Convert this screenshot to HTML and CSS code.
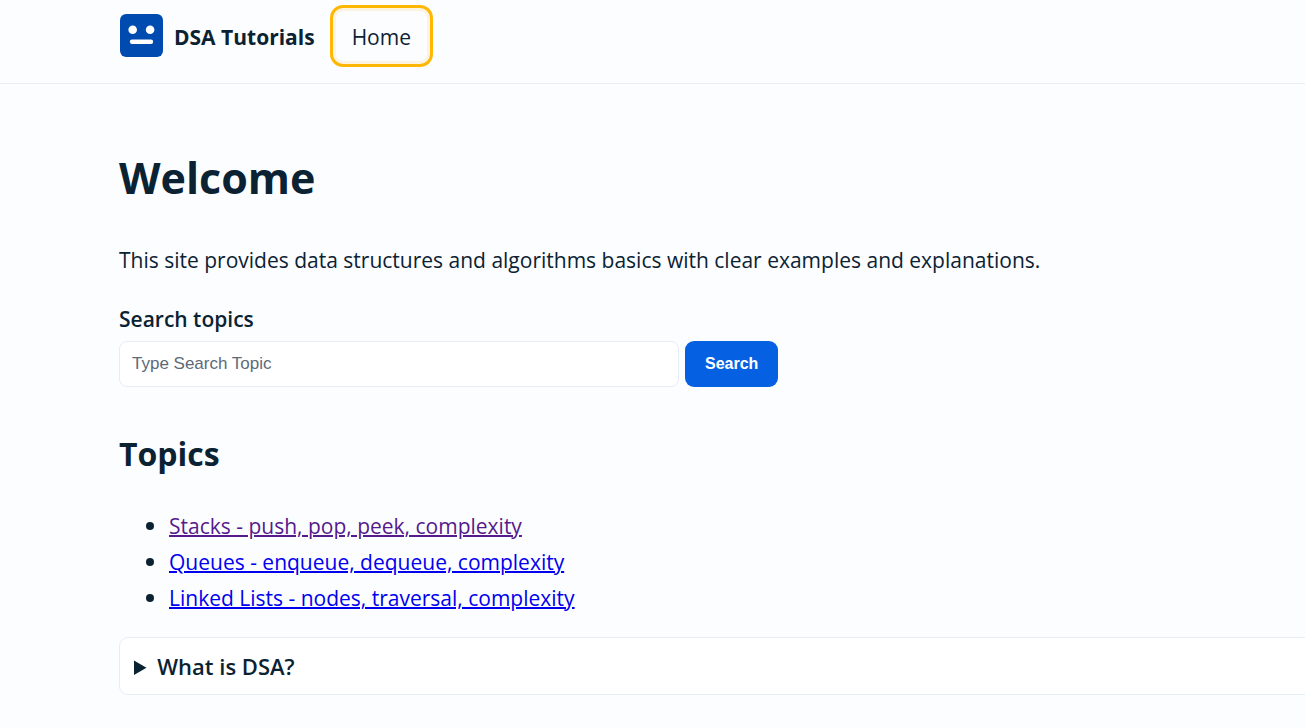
FILE: index.html
```html
<!DOCTYPE html>
<html lang="en">
<head>
<meta charset="utf-8">
<title>DSA Tutorials</title>
<link rel="stylesheet" href="styles.css">
</head>
<body>
<header class="site-header">
  <nav class="nav" aria-label="Main">
    <svg class="logo" viewBox="0 0 42 42" aria-hidden="true">
      <rect width="42" height="42" rx="6" fill="#004bb0"/>
      <circle cx="12.4" cy="15.4" r="4.2" fill="#fff"/>
      <circle cx="29.4" cy="15.4" r="4.2" fill="#fff"/>
      <rect x="9.6" y="25" width="22.8" height="4.4" rx="2.2" fill="#fff"/>
    </svg>
    <span class="brand">DSA Tutorials</span>
    <a class="nav-link" href="#home">Home</a>
  </nav>
</header>
<main class="content">
  <h1 class="title">Welcome</h1>
  <p class="intro">This site provides data structures and algorithms basics with clear examples and explanations.</p>
  <form class="search">
    <label class="search-label" for="topic">Search topics</label>
    <div class="search-row">
      <input class="search-input" id="topic" type="search" placeholder="Type Search Topic">
      <button class="search-button" type="button">Search</button>
    </div>
  </form>
  <h2 class="subtitle">Topics</h2>
  <ul class="topics">
    <li class="topic-item"><a class="topic visited" href="#stacks">Stacks - push, pop, peek, complexity</a></li>
    <li class="topic-item"><a class="topic" href="#queues">Queues - enqueue, dequeue, complexity</a></li>
    <li class="topic-item"><a class="topic" href="#lists">Linked Lists - nodes, traversal, complexity</a></li>
  </ul>
  <details class="faq">
    <summary class="question">What is DSA?</summary>
  </details>
</main>
</body>
</html>
```

FILE: styles.css
```css
* { box-sizing: border-box; }
body {
  margin: 0;
  overflow-x: hidden;
  background: #fcfdff;
  color: #0b2233;
  font: 21px/36px "Segoe UI", "Open Sans", "Noto Sans", sans-serif;
}
.site-header {
  padding: 5px 0 16px 120px;
  border-bottom: 1px solid #e6edf3;
}
.nav { display: flex; align-items: center; }
.logo { width: 43px; height: 43px; margin: 0 11px 2px 0; }
.brand { padding-top: 2px; font-weight: 700; margin-right: 15px; }
.nav-link {
  padding: 11px 19px 9px;
  border: 3px solid #ffb703;
  border-radius: 13px;
  box-shadow: inset 0 0 0 3px #fcf3e0;
  color: inherit;
  text-decoration: none;
}
.content { padding: 59px 0 32px 119px; }
.title { margin: 0 0 29px; font-size: 43px; line-height: 70px; }
.intro { margin: 0 0 24px; }
.search-label { display: block; font-weight: 600; line-height: 35px; margin-bottom: 4px; }
.search-row { display: flex; gap: 6px; }
.search-input {
  width: 560px;
  height: 46px;
  padding: 0 12px;
  border: 1px solid #e6edf6;
  border-radius: 8px;
  background: #fff;
  font: 17px "Liberation Sans", sans-serif;
}
.search-input::placeholder { color: #5c6b78; }
.search-button {
  height: 46px;
  padding: 0 20px;
  border: 0;
  border-radius: 9px;
  background: #0561e2;
  color: #fff;
  font: 700 16px "Liberation Sans", sans-serif;
}
.subtitle { margin: 40px 0 27px; font-size: 32px; line-height: 54px; }
.topics { margin: 0 0 21px; padding-left: 50px; line-height: 35px; }
.topic-item::marker { font-size: 22px; }
.topic { color: #0000ee; text-decoration-thickness: 2px; }
.visited { color: #551a8b; }
.faq {
  margin-right: -24px;
  padding: 10px 14px;
  border: 1px solid #e6edf6;
  border-radius: 9px;
  background: #fff;
}
.question { font-size: 22px; font-weight: 600; }
```
